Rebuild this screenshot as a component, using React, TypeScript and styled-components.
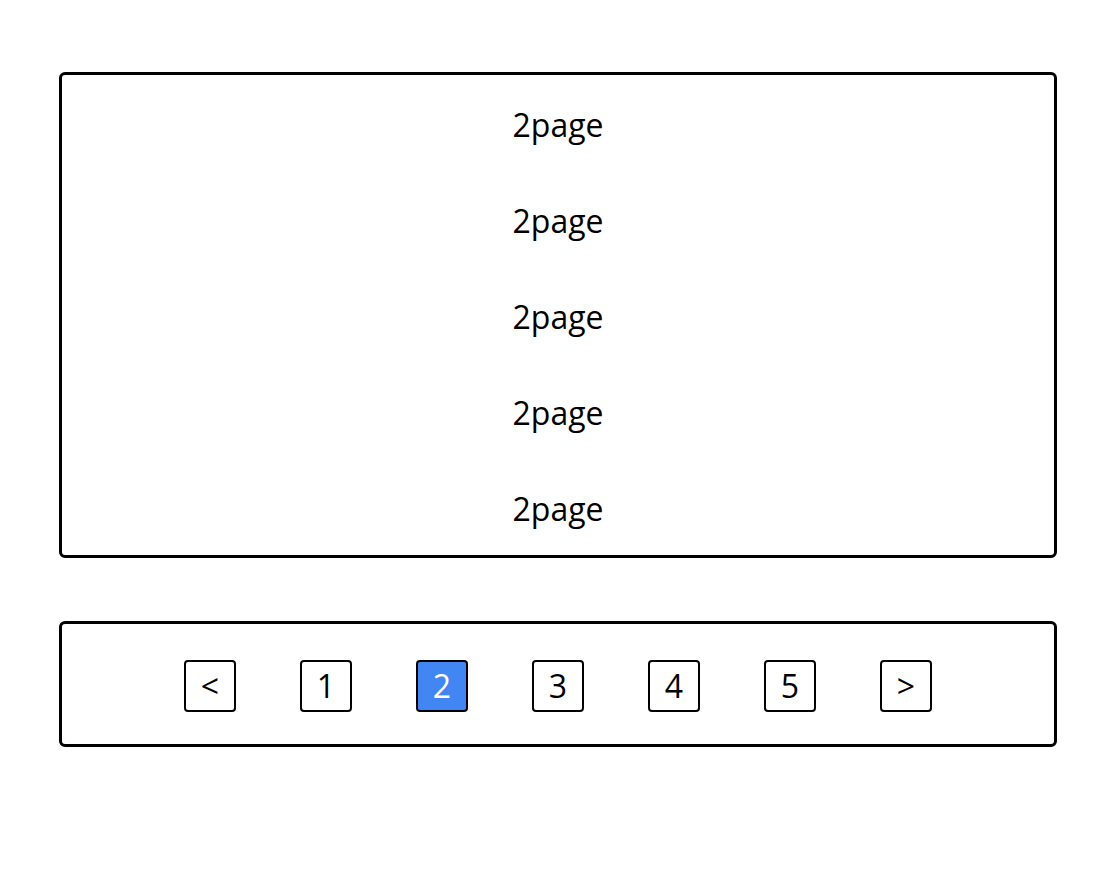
import React, { useState } from "react";
import styled, { createGlobalStyle } from "styled-components";

const Global = createGlobalStyle`
  html, body { margin: 0; padding: 0; background: #fff; }
  body { font-family: "Open Sans", "DejaVu Sans", sans-serif; color: #000; }
`;

const Page = styled.div`
  padding: 72px 61px 0 59px;
  display: flex;
  flex-direction: column;
  gap: 63px;
`;

const Panel = styled.div`
  border: 3px solid #000;
  border-radius: 6px;
  box-sizing: border-box;
`;

const List = styled(Panel)`
  height: 486px;
  display: flex;
  flex-direction: column;
`;

const Row = styled.div`
  flex: 1;
  display: flex;
  align-items: center;
  justify-content: center;
  font-size: 32px;
  padding-top: 3px;
`;

const Bar = styled(Panel)`
  height: 126px;
  display: flex;
  align-items: center;
  justify-content: center;
  gap: 64px;
  padding-top: 4px;
`;

const PageButton = styled.button<{ $active?: boolean }>`
  width: 52px;
  height: 52px;
  box-sizing: border-box;
  border: 2px solid #000;
  border-radius: 4px;
  padding: 0;
  margin: 0;
  font-family: "Open Sans", "DejaVu Sans", sans-serif;
  font-size: 32px;
  line-height: 1;
  display: flex;
  align-items: center;
  justify-content: center;
  background: ${(p) => (p.$active ? "#4286f4" : "#fff")};
  color: ${(p) => (p.$active ? "#fff" : "#000")};
  cursor: pointer;
`;

export default function App() {
  const [page, setPage] = useState(2);
  const pages = [1, 2, 3, 4, 5];
  return (
    <>
      <Global />
      <Page>
        <List>
          {[0, 1, 2, 3, 4].map((i) => (
            <Row key={i}>{page}page</Row>
          ))}
        </List>
        <Bar>
          <PageButton onClick={() => setPage((p) => Math.max(1, p - 1))}>&lt;</PageButton>
          {pages.map((n) => (
            <PageButton key={n} $active={n === page} onClick={() => setPage(n)}>
              {n}
            </PageButton>
          ))}
          <PageButton onClick={() => setPage((p) => Math.min(5, p + 1))}>&gt;</PageButton>
        </Bar>
      </Page>
    </>
  );
}
